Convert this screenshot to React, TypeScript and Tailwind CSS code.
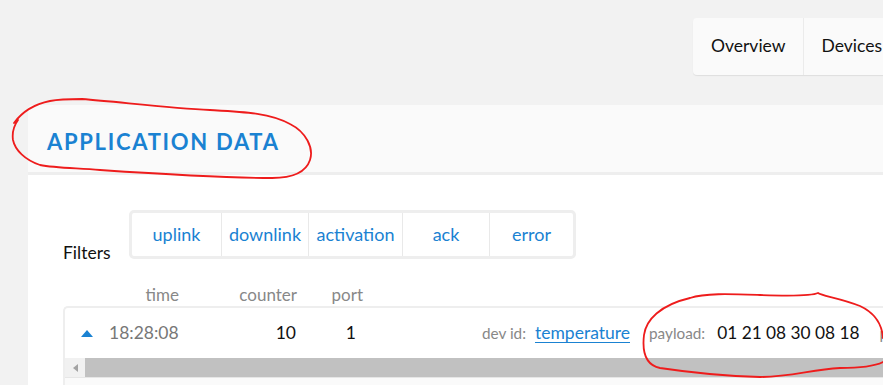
import React from 'react';

const FILTERS = [
  { label: 'uplink', w: 'w-[89px]' },
  { label: 'downlink', w: 'w-[87px]' },
  { label: 'activation', w: 'w-[94px]' },
  { label: 'ack', w: 'w-[87px]' },
  { label: 'error', w: 'w-[84px]' },
];

function NavTabs() {
  return (
    <div className="flex h-[57px] w-max rounded-[4px] bg-[#fafafa] shadow-[0_1px_1px_rgba(0,0,0,0.08)]">
      <div className="flex items-center border-r border-[#ebebeb] pl-[18px] pr-[17px] text-[17.5px] text-[#111]">Overview</div>
      <div className="flex items-center px-[18px] text-[17.5px] text-[#111]">Devices</div>
      <div className="flex items-center px-[18px] text-[17.5px] text-[#111]">Payload Formats</div>
    </div>
  );
}

function Filters() {
  return (
    <div className="flex items-start">
      <div className="mt-[33px] mb-[-4px] w-[66px] text-[17.5px] leading-[20px] text-[#111]">Filters</div>
      <div className="flex h-[49px] rounded-[5px] border-[3px] border-[#eeeeee] bg-white">
        {FILTERS.map((f, i) => (
          <div
            key={f.label}
            className={`flex items-center justify-center text-[18px] text-[#1a82d2] ${f.w} ${i > 0 ? 'border-l border-[#e9e9e9]' : ''}`}
          >
            {f.label}
          </div>
        ))}
      </div>
    </div>
  );
}

function DataRow() {
  return (
    <div className="mt-[1px] w-[900px] rounded-tl-[5px] border-l-2 border-t-2 border-[#eeeeee]">
      <div className="flex h-[50px] items-center pl-[16px] whitespace-nowrap">
        <svg width="12" height="7" viewBox="0 0 12 7" className="shrink-0">
          <polygon points="6,0 12,7 0,7" fill="#1a82d2" />
        </svg>
        <span className="ml-[16px] w-[69px] text-[17.5px] text-[#777]">18:28:08</span>
        <span className="w-[118px] text-right text-[17.5px] text-[#111]">10</span>
        <span className="w-[63px] text-right text-[17.5px] text-[#111] pr-[3px]">1</span>
        <span className="ml-[123px] text-[15.3px] text-[#888]">dev id:</span>
        <span className="ml-[9px] text-[17.5px] text-[#1a82d2] underline underline-offset-[3px]">temperature</span>
        <span className="ml-[19px] text-[15.3px] text-[#888]">payload:</span>
        <span className="ml-[12px] text-[17.3px] text-[#111]">01 21 08 30 08 18</span>
        <span className="ml-[20px] text-[15.3px] text-[#888]">port</span>
      </div>
      {/* horizontal scrollbar */}
      <div className="flex h-[19px] items-center bg-[#f1f1f1]">
        <div className="flex w-[20px] justify-center">
          <svg width="5" height="8" viewBox="0 0 5 8">
            <polygon points="5,0 5,8 0,4" fill="#a3a3a3" />
          </svg>
        </div>
        <div className="h-[19px] flex-1 bg-[#c1c1c1]" />
      </div>
      <div className="h-[8px] border-t border-[#e6e6e6] bg-[#fafafa]" />
    </div>
  );
}

// hand-drawn red marks over the screenshot
function Annotations() {
  return (
    <svg className="pointer-events-none absolute left-0 top-0" width="883" height="385" viewBox="0 0 883 385">
      <path
        d="M14 123 C 22 112, 35 104, 50 101 C 60 99, 72 99, 82 99 C 120 102, 170 108, 210 110 C 245 112, 270 113, 290 124 C 306 132, 314 148, 310 160 C 306 172, 294 178, 272 178 C 230 178, 160 174, 100 170 C 75 168, 55 168, 40 165 C 25 160, 15 150, 13 140 C 12 133, 13 127, 18 120"
        fill="none"
        stroke="#ee1c1c"
        strokeWidth="1.8"
        strokeLinecap="round"
      />
      <path
        d="M690 298 C 705 293, 730 294, 760 295 C 790 296, 812 296, 818 293 C 822 296, 840 298, 860 306 C 875 313, 882 325, 883 338 M883 362 C 875 366, 860 368, 840 368 C 810 370, 790 377, 760 377 C 720 376, 680 371, 660 368 C 645 365, 642 352, 644 335 C 646 320, 660 305, 690 298"
        fill="none"
        stroke="#ee1c1c"
        strokeWidth="1.8"
        strokeLinecap="round"
      />
    </svg>
  );
}

export default function App() {
  return (
    <div className="relative h-[385px] w-[883px] overflow-hidden bg-[#f2f2f2] font-['Lato',sans-serif]">
      <div className="h-[105px] pl-[693px] pt-[18px]">
        <NavTabs />
      </div>
      <div className="ml-[28px] w-[900px] rounded-tl-[5px] bg-white">
        <div className="flex h-[70px] items-center rounded-tl-[5px] border-b-[3px] border-[#eeeeee] bg-[#fafafa] pl-[19px] pt-[6px]">
          <h2 className="text-[22px] font-bold tracking-[1.7px] text-[#1a82d2]">APPLICATION DATA</h2>
        </div>
        <div className="pl-[35px] pt-[35px]">
          <Filters />
          <div className="ml-[1px] mt-[26px] flex h-[20px] items-center text-[17px] text-[#888]">
            <span className="w-[115px] text-right">time</span>
            <span className="w-[118px] text-right">counter</span>
            <span className="w-[66px] text-right">port</span>
          </div>
          <DataRow />
        </div>
      </div>
      <Annotations />
    </div>
  );
}
